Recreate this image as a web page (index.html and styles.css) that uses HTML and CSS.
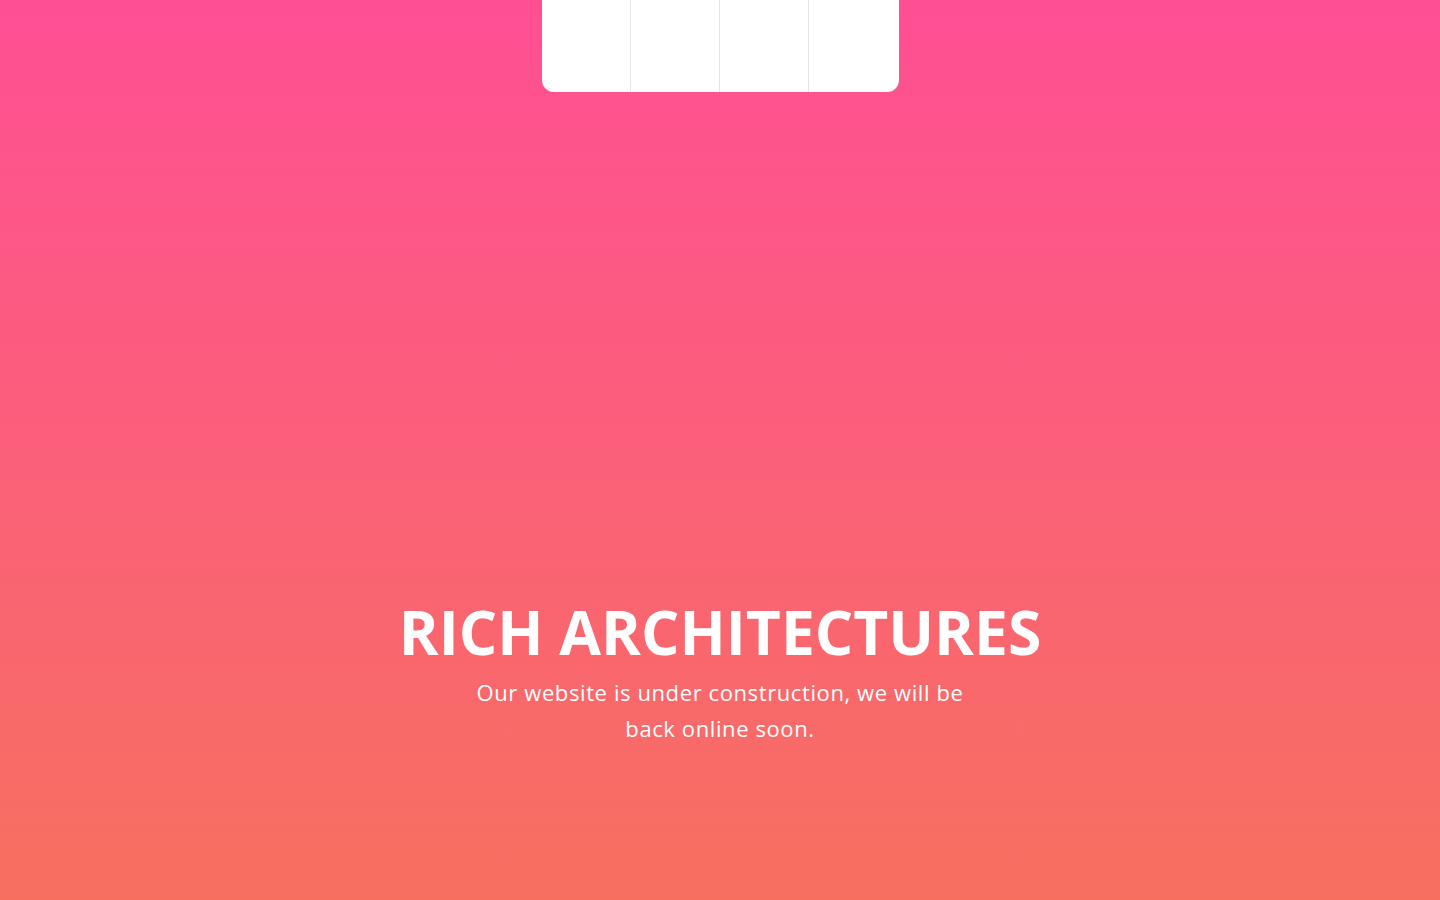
FILE: index.html
```html
<!DOCTYPE html>
<html lang="en">
<head>
<meta charset="utf-8">
<title>Rich Architectures</title>
<link rel="stylesheet" href="styles.css">
</head>
<body>
<div class="page">
  <div class="tabs">
    <div class="tab"></div>
    <div class="tab"></div>
    <div class="tab"></div>
    <div class="tab"></div>
  </div>
  <main class="hero">
    <h1 class="title">RICH ARCHITECTURES</h1>
    <p class="lead">Our website is under construction, we will be back online soon.</p>
  </main>
</div>
</body>
</html>
```
FILE: styles.css
```css
html, body {
  margin: 0;
  padding: 0;
  height: 100%;
}
body {
  font-family: "Open Sans", "Noto Sans", sans-serif;
  color: #fff;
  background: linear-gradient(180deg, #ff4f94 0%, #f7705f 100%);
  overflow: hidden;
}
.page {
  height: 900px;
  display: flex;
  flex-direction: column;
  align-items: center;
}
.tabs {
  display: flex;
  width: 357px;
  height: 92px;
  background: #fff;
  border-radius: 0 0 12px 12px;
  overflow: hidden;
}
.tab {
  flex: 0 0 88px;
}
.tab + .tab {
  border-left: 1px solid #e6e6e6;
}
.tab:last-child {
  flex: 1;
}
.hero {
  margin-top: 502px;
  text-align: center;
}
.title {
  margin: 0;
  font-size: 60.5px;
  font-weight: 700;
  line-height: 76px;
  letter-spacing: 0;
}
.lead {
  margin: 4px auto 0;
  width: 500px;
  font-size: 22px;
  line-height: 36px;
  letter-spacing: 0.6px;
}
```
